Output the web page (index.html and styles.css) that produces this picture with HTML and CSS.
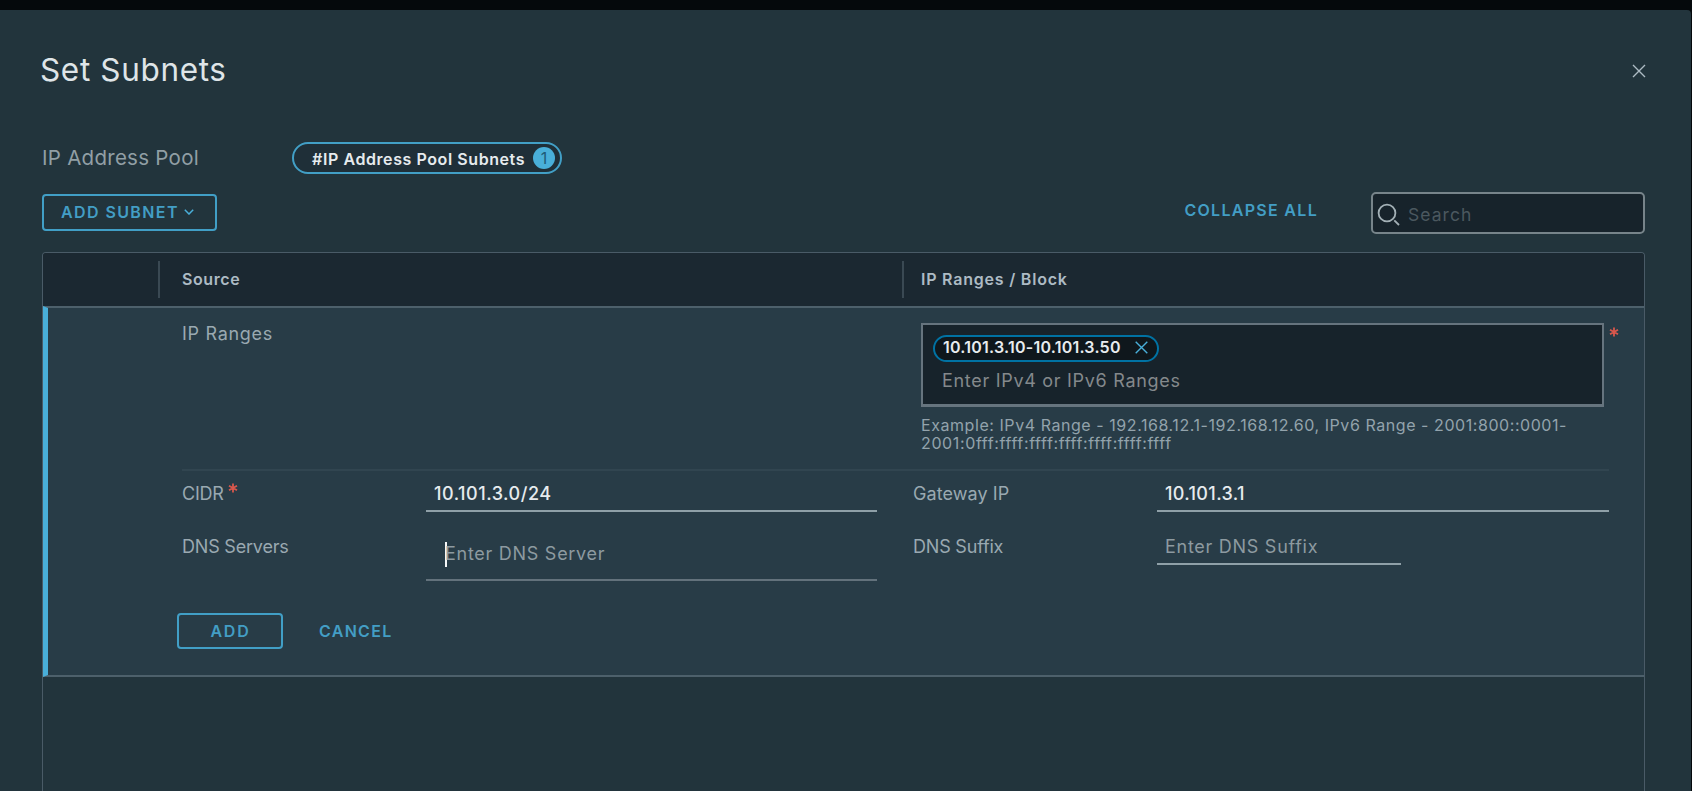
FILE: index.html
```html
<!DOCTYPE html>
<html lang="en">
<head>
<meta charset="utf-8">
<title>Set Subnets</title>
<link rel="stylesheet" href="styles.css">
</head>
<body>
<main class="modal">
  <header class="modal-header">
    <h1 class="title">Set Subnets</h1>
    <svg class="close" width="14" height="14" viewBox="0 0 14 14"><path d="M1 1 13 13M13 1 1 13"/></svg>
  </header>

  <section class="pool">
    <span class="pool-label">IP Address Pool</span>
    <div class="pool-tag"><span class="pool-name">#IP Address Pool Subnets</span><span class="badge">1</span></div>
  </section>

  <section class="toolbar">
    <button class="btn add-subnet"><span class="btn-text">ADD SUBNET</span><svg width="10" height="6" viewBox="0 0 10 6"><path d="M.8.8 5 5 9.2.8"/></svg></button>
    <a class="link collapse">COLLAPSE ALL</a>
    <div class="search">
      <svg width="24" height="24" viewBox="0 0 24 24"><circle cx="10" cy="10" r="8.4"/><path d="M17.3 17.3 22 22"/></svg>
      <span class="search-text">Search</span>
    </div>
  </section>

  <section class="table">
    <div class="thead">
      <div class="th th-actions"></div>
      <div class="th th-source">Source</div>
      <div class="th th-block">IP Ranges / Block</div>
    </div>
    <div class="row">
      <div class="range-row">
        <div class="source label">IP Ranges</div>
        <div class="range-field">
          <div class="range-box">
            <div class="chip"><span class="chip-text">10.101.3.10-10.101.3.50</span><svg width="13" height="13" viewBox="0 0 13 13"><path d="M.7.7 12.3 12.3M12.3.7.7 12.3"/></svg></div>
            <div class="range-hint">Enter IPv4 or IPv6 Ranges</div>
          </div>
          <p class="example">Example: IPv4 Range - 192.168.12.1-192.168.12.60, IPv6 Range - 2001:800::0001-<br><span class="example-tail">2001:0fff:ffff:ffff:ffff:ffff:ffff:ffff</span></p>
        </div>
        <svg class="star" width="10" height="10" viewBox="0 0 10 10"><path d="M5 .4V9.6M1 2.7 9 7.3M9 2.7 1 7.3"/></svg>
      </div>
      <div class="form">
        <label class="label cidr">CIDR<svg class="star" width="10" height="10" viewBox="0 0 10 10"><path d="M5 .4V9.6M1 2.7 9 7.3M9 2.7 1 7.3"/></svg></label>
        <div class="input">10.101.3.0/24</div>
        <label class="label gateway">Gateway IP</label>
        <div class="input gateway-value">10.101.3.1</div>
        <label class="label dns">DNS Servers</label>
        <div class="input tall"><span class="caret"></span><span class="placeholder">Enter DNS Server</span></div>
        <label class="label suffix">DNS Suffix</label>
        <div class="input short"><span class="placeholder">Enter DNS Suffix</span></div>
      </div>
      <div class="actions">
        <button class="btn add"><span class="btn-text">ADD</span></button>
        <a class="link cancel">CANCEL</a>
      </div>
    </div>
  </section>
</main>
</body>
</html>
```
FILE: styles.css
```css
* { box-sizing: border-box; }
body {
  margin: 0;
  height: 791px;
  overflow: hidden;
  padding-top: 10px;
  background: #05090c;
  font-family: Inter, "Liberation Sans", sans-serif;
  color: #9aa8ae;
  white-space: nowrap;
}
svg { display: block; fill: none; flex: none; }
.modal {
  width: 1691px;
  height: 781px;
  padding: 0 46px 0 42px;
  background: #22343c;
  border-radius: 0 4px 0 0;
  display: flex;
  flex-direction: column;
}
.modal-header { display: flex; justify-content: space-between; align-items: center; height: 120px; flex: none; }
.title { margin: 0 0 0 -2px; font-size: 31.5px; font-weight: 400; letter-spacing: .65px; line-height: 40px; color: #dfe5e8; }
.close { stroke: #adbbc4; stroke-width: 1.4; margin: 1px -1px 0 0; }

.pool { display: flex; align-items: center; height: 56px; flex: none; }
.pool-label { width: 250px; font-size: 20.5px; letter-spacing: .27px; line-height: 28px; margin-top: -1px; color: #919fa5; }
.pool-tag {
  display: flex; align-items: center; justify-content: space-between;
  width: 270px; height: 32px; padding: 0 5px 0 18px;
  border: 2px solid #429fc6; border-radius: 16px; background: #1f2f38;
}
.pool-name { font-size: 16px; font-weight: 600; letter-spacing: .58px; color: #e6ebee; line-height: 20px; padding-top: 2px; }
.badge {
  width: 22px; height: 22px; border-radius: 11px; background: #49afd9;
  color: #1f5b78; font-size: 16px; line-height: 22px; text-align: center;
}

.toolbar { display: flex; align-items: flex-start; height: 66px; padding-top: 6px; flex: none; }
.btn {
  display: flex; align-items: center; background: none; padding: 0;
  border: 2px solid #419fc6; border-radius: 4px;
  font: 600 16px Inter, "Liberation Sans", sans-serif; color: #439ec5;
}
.btn-text { line-height: 20px; letter-spacing: 1.4px; }
.btn path { stroke: #49afd9; stroke-width: 1.5; }
.link { font-size: 16px; font-weight: 600; letter-spacing: 1.3px; color: #439ec5; }
.add-subnet { width: 175px; height: 37px; margin-top: 2px; padding: 0 0 1px 17px; gap: 5px; }
.collapse { margin-left: auto; margin-right: 53px; line-height: 37px; }
.search {
  display: flex; align-items: center; width: 274px; height: 42px; padding-left: 4px; gap: 7px;
  border: 2px solid #77848a; border-radius: 5px; background: #17232b;
}
.search svg { stroke: #a3b0b6; stroke-width: 1.8; margin-top: 4px; }
.search-text { font-size: 17.5px; letter-spacing: 1.05px; color: #4b585f; margin-top: 2px; }

.table { flex: 1; border: 1px solid #4a5b67; border-bottom: 0; border-radius: 4px 4px 0 0; overflow: hidden; }
.thead { display: flex; align-items: center; height: 53px; background: #1b2831; }
.th { height: 37px; font-size: 16px; font-weight: 600; letter-spacing: .6px; line-height: 37px; color: #adbbc4; }
.th + .th { border-left: 2px solid #3a4953; }
.th-actions { width: 115px; }
.th-source { width: 744px; padding-left: 22px; }
.th-block { padding-left: 17px; letter-spacing: .78px; }

.row {
  height: 371px; padding-left: 134px;
  background: #283c47;
  border: solid #4d606b; border-width: 2px 0; border-left: 5px solid #49afd9;
}
.label { font-size: 18px; color: #9aa9b1; }
.range-row { display: flex; width: 1427px; height: 163px; padding-top: 15px; border-bottom: 2px solid #314550; }
.source { width: 739px; letter-spacing: .7px; line-height: 22px; flex: none; }
.range-field { width: 683px; flex: none; }
.range-box { height: 84px; padding: 10px 0 0 10px; background: #17232b; border: 2px solid #66747e; border-bottom-width: 3px; }
.chip {
  display: flex; align-items: center; width: 226px; height: 27px; padding: 0 9px 0 8px; justify-content: space-between;
  border: 2px solid #0072a3; border-radius: 14px; background: #0f171c;
}
.chip-text { font-size: 16px; font-weight: 600; letter-spacing: .23px; color: #e8ecef; line-height: 20px; padding-bottom: 3px; }
.chip svg { margin-bottom: 2px; }
.chip path { stroke: #49afd9; stroke-width: 1.4; }
.range-hint { padding-left: 9px; margin-top: 7px; font-size: 18px; letter-spacing: .7px; line-height: 24px; color: #84898c; }
.example { margin: 10px 0 0; font-size: 16px; letter-spacing: .56px; line-height: 17.5px; color: #93a3ac; }
.example-tail { letter-spacing: .63px; }
.star { margin: 4px 0 0 5px; flex: none; }
.star path { stroke: #d9574c; stroke-width: 1.8; }

.form { display: grid; grid-template-columns: 244px 451px 36px 244px 452px; grid-template-rows: 53px 89px; }
.form .label { line-height: 22px; padding-top: 12px; display: flex; }
.cidr { letter-spacing: -.2px; }
.cidr .star { margin: 0 0 0 4px; }
.gateway, .suffix { grid-column: 4; }
.gateway { letter-spacing: .08px; }
.dns, .suffix { letter-spacing: -.2px; }
.input {
  display: flex; align-items: center; height: 41px; padding: 6px 0 0 8px;
  border-bottom: 2px solid #8fa0a8;
  font-size: 18px; font-weight: 500; letter-spacing: .52px; color: #e6ebee;
}
.gateway-value { letter-spacing: .35px; }
.tall { height: 57px; padding: 5px 0 0 19px; border-color: #63727c; }
.short { width: 244px; padding-top: 6px; }
.placeholder { color: #8d9aa0; font-weight: 400; letter-spacing: .72px; }
.caret { width: 2px; height: 25px; margin-right: -2px; background: #f4f6f7; }
.tall .placeholder { margin-top: -2px; }

.actions { display: flex; align-items: center; margin-left: -5px; }
.add { width: 106px; height: 36px; padding-left: 1px; justify-content: center; }
.add .btn-text { letter-spacing: 1.8px; }
.cancel { margin-left: 36px; }
```
